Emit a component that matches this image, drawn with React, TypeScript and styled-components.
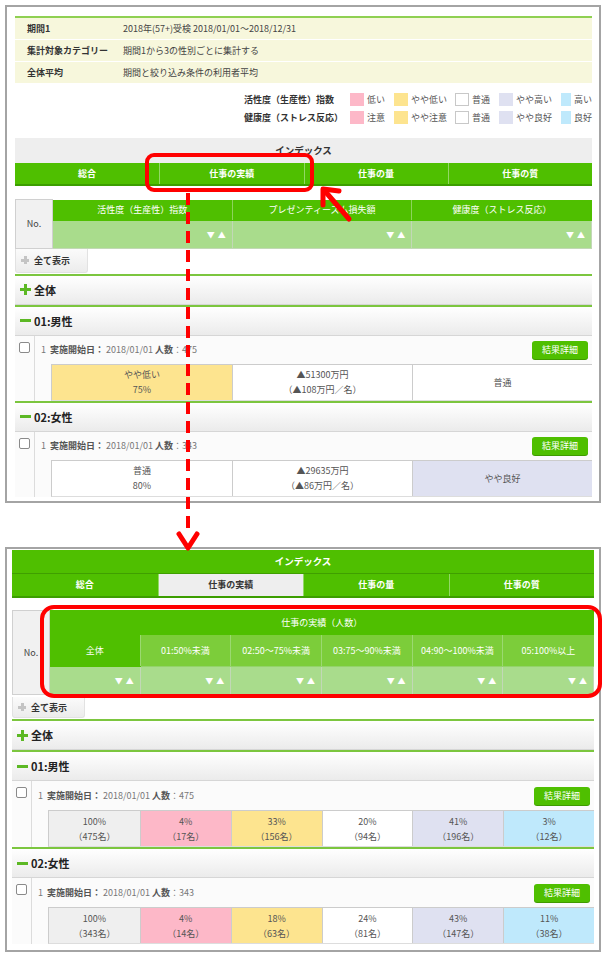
import React from 'react';
import styled, { createGlobalStyle } from 'styled-components';

const GlobalStyle = createGlobalStyle`
  html, body {
    margin: 0;
    padding: 0;
    background: #fff;
  }
  body {
    font-family: "Noto Sans CJK JP", "Noto Sans", sans-serif;
    font-size: 9px;
    color: #333;
  }
`;

const GREEN = '#4fbf00';
const MID_GREEN = '#7ccd3a';
const LIGHT_GREEN = '#a9dc8c';

const swatch: Record<string, string> = {
  low: '#fdb8c8',
  midLow: '#fde48f',
  normal: '#ffffff',
  midHigh: '#dfe1f1',
  high: '#bfe9fc',
  total: '#efefef',
};

const Page = styled.div`
  position: relative;
  width: 609px;
  height: 962px;
  box-sizing: border-box;
  padding: 5px 0 0 5px;
`;

const Frame = styled.section<{ $pad: string; $gap?: number }>`
  width: 596px;
  box-sizing: border-box;
  border: 2px solid #a4a4a4;
  padding: ${p => p.$pad};
  margin-top: ${p => p.$gap ?? 0}px;
  background: #fff;
`;

/* condition summary */
const InfoTable = styled.div`
  border-top: 2px solid #8fd052;
  background: #f7f7dc;
`;

const InfoRow = styled.div`
  display: grid;
  grid-template-columns: 96px 1fr;
  align-items: center;
  height: 21px;
  padding-left: 12px;
  & + & {
    border-top: 1px solid #fff;
  }
  b {
    font-weight: bold;
    color: #333;
  }
  span {
    color: #444;
  }
`;

/* colour legend */
const Legend = styled.div`
  display: grid;
  grid-template-columns: 106px 44px 61px 44px 62px 31px;
  grid-auto-rows: 18px;
  justify-content: end;
  align-items: center;
  margin-top: 7px;
`;

const LegendLabel = styled.b`
  font-weight: bold;
  white-space: nowrap;
`;

const LegendItem = styled.div`
  display: flex;
  align-items: center;
  gap: 3px;
  color: #555;
  white-space: nowrap;
`;

const Swatch = styled.i<{ $c: string }>`
  display: block;
  width: 14px;
  height: 13px;
  box-sizing: border-box;
  background: ${p => p.$c};
  border: 1px solid ${p => (p.$c === '#ffffff' ? '#c8c8c8' : p.$c)};
`;

/* index tabs */
const IndexTitle = styled.div<{ $green?: boolean; $top: number }>`
  margin-top: ${p => p.$top}px;
  height: ${p => (p.$green ? 23 : 24)}px;
  display: flex;
  align-items: center;
  justify-content: center;
  font-size: 9.5px;
  font-weight: bold;
  background: ${p => (p.$green ? GREEN : '#eeeeee')};
  color: ${p => (p.$green ? '#fff' : '#333')};
  border-bottom: 1px solid ${p => (p.$green ? '#3f9f00' : '#eeeeee')};
`;

const Tabs = styled.div<{ $h: number }>`
  display: grid;
  grid-template-columns: repeat(4, 1fr);
  height: ${p => p.$h}px;
  border-bottom: 2px solid #3c9e00;
  background: ${GREEN};
`;

const Tab = styled.div<{ $active?: boolean }>`
  display: flex;
  align-items: center;
  justify-content: center;
  font-weight: bold;
  color: ${p => (p.$active ? '#333' : '#fff')};
  background: ${p => (p.$active ? '#eeeeee' : GREEN)};
  & + & {
    border-left: 1px solid #93d866;
  }
`;

/* sortable header table */
const SortTable = styled.table<{ $top: number }>`
  width: 100%;
  border-collapse: collapse;
  table-layout: fixed;
  margin-top: ${p => p.$top}px;
  font-size: 9px;
  th,
  td {
    padding: 0;
  }
`;

const NoCol = styled.col`
  width: 37px;
`;

const NoCell = styled.th`
  background: #f1f1f1;
  border: 1px solid #d0d0d0;
  color: #444;
  font-weight: 400;
`;

const HeadCell = styled.th<{ $mid?: boolean; $h: number }>`
  height: ${p => p.$h}px;
  background: ${p => (p.$mid ? MID_GREEN : GREEN)};
  color: #fff;
  font-weight: normal;
  border-left: 1px solid ${p => (p.$mid ? '#9bd970' : '#8dd45c')};
  border-bottom: 1px solid ${p => (p.$mid ? '#93d36a' : GREEN)};
  &:first-of-type {
    border-left-color: ${GREEN};
  }
`;

const SortCell = styled.td<{ $h: number }>`
  height: ${p => p.$h}px;
  background: ${LIGHT_GREEN};
  border: 1px solid #c2d8b6;
  text-align: right;
  padding-right: 3px !important;
  color: #fff;
  font-size: 8px;
  letter-spacing: 3px;
`;

const ShowAll = styled.div<{ $h: number; $top: number }>`
  margin-top: ${p => p.$top}px;
  width: 73px;
  height: ${p => p.$h}px;
  box-sizing: border-box;
  display: flex;
  align-items: center;
  gap: 5px;
  padding-left: 5px;
  font-weight: bold;
  color: #333;
  background: linear-gradient(#fbfbfb, #ececec);
  border: 1px solid #e2e2e2;
  border-top: none;
  border-radius: 0 0 3px 3px;
`;

const PlusMark = styled.i<{ $c: string; $size: number; $minus?: boolean }>`
  position: relative;
  display: block;
  width: ${p => p.$size}px;
  height: ${p => p.$size}px;
  flex: none;
  &::before,
  &::after {
    content: '';
    position: absolute;
    background: ${p => p.$c};
  }
  &::before {
    left: 0;
    right: 0;
    top: 50%;
    height: 3px;
    margin-top: -1.5px;
  }
  &::after {
    display: ${p => (p.$minus ? 'none' : 'block')};
    top: 0;
    bottom: 0;
    left: 50%;
    width: 3px;
    margin-left: -1.5px;
  }
`;

/* result groups */
const GroupHeader = styled.div<{ $top?: number }>`
  margin-top: ${p => p.$top ?? 0}px;
  height: 28px;
  display: flex;
  align-items: center;
  gap: 3px;
  padding-left: 5px;
  border-top: 2px solid #7cc63f;
  border-bottom: 1px solid #d6d6d6;
  background: linear-gradient(#ffffff, #ebebeb);
  font-size: 11px;
  font-weight: bold;
  color: #222;
`;

const Record = styled.div`
  display: flex;
  background: #fbfbfb;
`;

const CheckCol = styled.div`
  width: 19px;
  flex: none;
  border-right: 1px solid #dcdcdc;
  padding-top: 6px;
  display: flex;
  justify-content: center;
  align-items: flex-start;
`;

const CheckBox = styled.span`
  display: block;
  width: 9px;
  height: 9px;
  border: 1px solid #8a8a8a;
  border-radius: 2px;
  background: #fff;
`;

const RecordBody = styled.div`
  flex: 1;
  min-width: 0;
`;

const RecordLine = styled.div<{ $h: number }>`
  height: ${p => p.$h}px;
  display: flex;
  align-items: center;
  padding: 0 4px 0 6px;
  color: #777;
  b {
    font-weight: bold;
    color: #555;
  }
  em {
    font-style: normal;
    margin: 0 4px 0 0;
  }
`;

const DetailButton = styled.span`
  margin-left: auto;
  width: 56px;
  height: 18px;
  display: flex;
  align-items: center;
  justify-content: center;
  background: ${GREEN};
  border-radius: 3px;
  color: #fff;
  box-shadow: 0 1px 0 #3f9a00;
`;

const Cells = styled.div<{ $n: number }>`
  display: grid;
  grid-template-columns: repeat(${p => p.$n}, 1fr);
  margin-left: 16px;
  border-top: 1px solid #cccccc;
  border-left: 1px solid #cccccc;
  border-bottom: 1px solid #dddddd;
`;

const Cell = styled.div<{ $bg: string }>`
  height: 35px;
  display: flex;
  flex-direction: column;
  align-items: center;
  justify-content: center;
  line-height: 15px;
  background: ${p => p.$bg};
  color: #555;
  & + & {
    border-left: 1px solid #cccccc;
  }
`;

const Overlay = styled.svg`
  position: absolute;
  top: 0;
  left: 0;
  pointer-events: none;
`;

type CellData = { bg: string; lines: string[] };
type RecordData = { count: number; cells: CellData[] };

const legendRows = [
  { label: '活性度（生産性）指数', items: ['低い', 'やや低い', '普通', 'やや高い', '高い'] },
  { label: '健康度（ストレス反応）', items: ['注意', 'やや注意', '普通', 'やや良好', '良好'] },
];
const legendColors = [swatch.low, swatch.midLow, swatch.normal, swatch.midHigh, swatch.high];

const tabs = ['総合', '仕事の実績', '仕事の量', '仕事の質'];

const overallRecords: RecordData[] = [
  {
    count: 475,
    cells: [
      { bg: swatch.midLow, lines: ['やや低い', '75%'] },
      { bg: swatch.normal, lines: ['▲51300万円', '（▲108万円／名）'] },
      { bg: swatch.normal, lines: ['普通'] },
    ],
  },
  {
    count: 343,
    cells: [
      { bg: swatch.normal, lines: ['普通', '80%'] },
      { bg: swatch.normal, lines: ['▲29635万円', '（▲86万円／名）'] },
      { bg: swatch.midHigh, lines: ['やや良好'] },
    ],
  },
];

const bands = ['#efefef', swatch.low, swatch.midLow, swatch.normal, swatch.midHigh, swatch.high];
const perfRecord = (count: number, rows: [string, string][]): RecordData => ({
  count,
  cells: rows.map(([pct, n], i) => ({ bg: bands[i], lines: [pct, `（${n}名）`] })),
});

const perfRecords: RecordData[] = [
  perfRecord(475, [['100%', '475'], ['4%', '17'], ['33%', '156'], ['20%', '94'], ['41%', '196'], ['3%', '12']]),
  perfRecord(343, [['100%', '343'], ['4%', '14'], ['18%', '63'], ['24%', '81'], ['43%', '147'], ['11%', '38']]),
];

const perfColumns = ['01:50%未満', '02:50～75%未満', '03:75～90%未満', '04:90～100%未満', '05:100%以上'];

const RecordRow: React.FC<{ data: RecordData; line: number }> = ({ data, line }) => (
  <Record>
    <CheckCol>
      <CheckBox />
    </CheckCol>
    <RecordBody>
      <RecordLine $h={line}>
        <em>1</em>
        <b>実施開始日：</b>&nbsp;2018/01/01&nbsp;<b>人数</b>：{data.count}
        <DetailButton>結果詳細</DetailButton>
      </RecordLine>
      <Cells $n={data.cells.length}>
        {data.cells.map((c, i) => (
          <Cell key={i} $bg={c.bg}>
            {c.lines.map(l => (
              <span key={l}>{l}</span>
            ))}
          </Cell>
        ))}
      </Cells>
    </RecordBody>
  </Record>
);

const Groups: React.FC<{ records: RecordData[]; line: number; top: number }> = ({ records, line, top }) => (
  <>
    <GroupHeader $top={top}>
      <PlusMark $c="#5cb824" $size={11} />
      全体
    </GroupHeader>
    <GroupHeader>
      <PlusMark $c="#5cb824" $size={11} $minus />
      01:男性
    </GroupHeader>
    <RecordRow data={records[0]} line={line} />
    <GroupHeader>
      <PlusMark $c="#5cb824" $size={11} $minus />
      02:女性
    </GroupHeader>
    <RecordRow data={records[1]} line={line} />
  </>
);

const Arrows: React.FC = () => (
  <Overlay width={609} height={962} viewBox="0 0 609 962">
    <g fill="none" stroke="#ff0000" strokeLinecap="round" strokeLinejoin="round">
      <rect x={147} y={155} width={165} height={35} rx={7} strokeWidth={4} />
      <line x1={349} y1={219} x2={324} y2={190} strokeWidth={5} />
      <polyline points="339,191 323,189 323,205" strokeWidth={5} />
      <line x1={188} y1={193} x2={188} y2={535} strokeWidth={4} strokeDasharray="12 7" strokeLinecap="butt" />
      <polyline points="179,534 188,548 197,534" strokeWidth={5} />
      <rect x={42} y={607} width={558} height={89} rx={12} strokeWidth={4} />
    </g>
  </Overlay>
);

const App: React.FC = () => (
  <Page>
    <GlobalStyle />

    <Frame $pad="9px 7px 4px 8px">
      <InfoTable>
        <InfoRow>
          <b>期間1</b>
          <span>2018年(57+)受検 2018/01/01～2018/12/31</span>
        </InfoRow>
        <InfoRow>
          <b>集計対象カテゴリー</b>
          <span>期間1から3の性別ごとに集計する</span>
        </InfoRow>
        <InfoRow>
          <b>全体平均</b>
          <span>期間と絞り込み条件の利用者平均</span>
        </InfoRow>
      </InfoTable>

      <Legend>
        {legendRows.map(row => (
          <React.Fragment key={row.label}>
            <LegendLabel>{row.label}</LegendLabel>
            {row.items.map((item, i) => (
              <LegendItem key={item + i}>
                <Swatch $c={legendColors[i]} />
                {item}
              </LegendItem>
            ))}
          </React.Fragment>
        ))}
      </Legend>

      <IndexTitle $top={12}>インデックス</IndexTitle>
      <Tabs $h={21}>
        {tabs.map(t => (
          <Tab key={t}>{t}</Tab>
        ))}
      </Tabs>

      <SortTable $top={13}>
        <colgroup>
          <NoCol />
          <col />
          <col />
          <col />
        </colgroup>
        <tbody>
          <tr>
            <NoCell rowSpan={2}>No.</NoCell>
            <HeadCell $h={20}>活性度（生産性）指数</HeadCell>
            <HeadCell $h={20}>プレゼンティーズム損失額</HeadCell>
            <HeadCell $h={20}>健康度（ストレス反応）</HeadCell>
          </tr>
          <tr>
            <SortCell $h={27}>▼▲</SortCell>
            <SortCell $h={27}>▼▲</SortCell>
            <SortCell $h={27}>▼▲</SortCell>
          </tr>
        </tbody>
      </SortTable>

      <ShowAll $h={24} $top={0}>
        <PlusMark $c="#c4c4c4" $size={8} />
        全て表示
      </ShowAll>

      <Groups records={overallRecords} line={28} top={1} />
    </Frame>

    <Frame $pad="1px 5px 6px 5px" $gap={44}>
      <IndexTitle $green $top={0}>
        インデックス
      </IndexTitle>
      <Tabs $h={22}>
        {tabs.map(t => (
          <Tab key={t} $active={t === '仕事の実績'}>
            {t}
          </Tab>
        ))}
      </Tabs>

      <SortTable $top={12}>
        <colgroup>
          <NoCol />
          <col />
          <col />
          <col />
          <col />
          <col />
          <col />
        </colgroup>
        <tbody>
          <tr>
            <NoCell rowSpan={3}>No.</NoCell>
            <HeadCell $h={24} colSpan={6}>
              仕事の実績（人数）
            </HeadCell>
          </tr>
          <tr>
            <HeadCell $h={31}>全体</HeadCell>
            {perfColumns.map(c => (
              <HeadCell key={c} $h={31} $mid>
                {c}
              </HeadCell>
            ))}
          </tr>
          <tr>
            {Array.from({ length: 6 }, (_, i) => (
              <SortCell key={i} $h={27}>
                ▼▲
              </SortCell>
            ))}
          </tr>
        </tbody>
      </SortTable>

      <ShowAll $h={21} $top={2}>
        <PlusMark $c="#c4c4c4" $size={8} />
        全て表示
      </ShowAll>

      <Groups records={perfRecords} line={29} top={1} />
    </Frame>

    <Arrows />
  </Page>
);

export default App;
